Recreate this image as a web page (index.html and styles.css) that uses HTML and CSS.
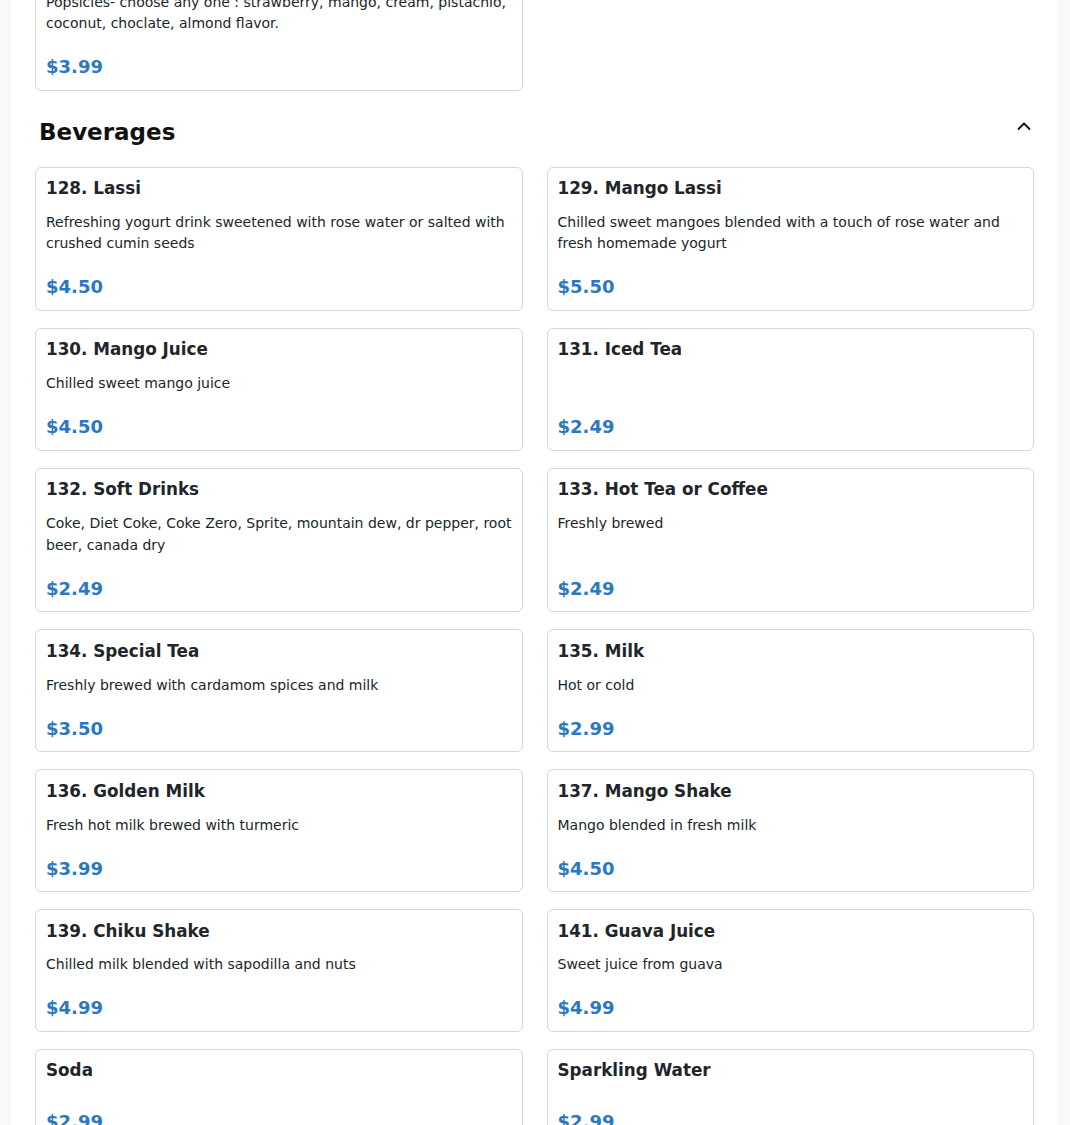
FILE: index.html
```html
<!DOCTYPE html>
<html lang="en">
<head>
<meta charset="utf-8">
<title>Menu</title>
<link rel="stylesheet" href="styles.css">
</head>
<body>
<main class="page">
  <section class="section">
    <div class="grid">
      <article class="card">
        <h3 class="card-title">127. Kulfi</h3>
        <p class="card-desc">Popsicles- choose any one : strawberry, mango, cream, pistachio, coconut, choclate, almond flavor.</p>
        <div class="card-price">$3.99</div>
      </article>
    </div>
  </section>

  <section class="section">
    <header class="section-head">
      <h2 class="section-title">Beverages</h2>
      <svg class="chevron" width="16" height="16" viewBox="0 0 16 16" aria-hidden="true"><polyline points="2.5,11 8,5.5 13.5,11" fill="none" stroke="#111" stroke-width="1.8" stroke-linecap="round" stroke-linejoin="round"/></svg>
    </header>
    <div class="grid">
      <article class="card">
        <h3 class="card-title">128. Lassi</h3>
        <p class="card-desc">Refreshing yogurt drink sweetened with rose water or salted with crushed cumin seeds</p>
        <div class="card-price">$4.50</div>
      </article>
      <article class="card">
        <h3 class="card-title">129. Mango Lassi</h3>
        <p class="card-desc">Chilled sweet mangoes blended with a touch of rose water and fresh homemade yogurt</p>
        <div class="card-price">$5.50</div>
      </article>
      <article class="card">
        <h3 class="card-title">130. Mango Juice</h3>
        <p class="card-desc">Chilled sweet mango juice</p>
        <div class="card-price">$4.50</div>
      </article>
      <article class="card">
        <h3 class="card-title">131. Iced Tea</h3>
        <div class="card-price">$2.49</div>
      </article>
      <article class="card">
        <h3 class="card-title">132. Soft Drinks</h3>
        <p class="card-desc">Coke, Diet Coke, Coke Zero, Sprite, mountain dew, dr pepper, root beer, canada dry</p>
        <div class="card-price">$2.49</div>
      </article>
      <article class="card">
        <h3 class="card-title">133. Hot Tea or Coffee</h3>
        <p class="card-desc">Freshly brewed</p>
        <div class="card-price">$2.49</div>
      </article>
      <article class="card">
        <h3 class="card-title">134. Special Tea</h3>
        <p class="card-desc">Freshly brewed with cardamom spices and milk</p>
        <div class="card-price">$3.50</div>
      </article>
      <article class="card">
        <h3 class="card-title">135. Milk</h3>
        <p class="card-desc">Hot or cold</p>
        <div class="card-price">$2.99</div>
      </article>
      <article class="card">
        <h3 class="card-title">136. Golden Milk</h3>
        <p class="card-desc">Fresh hot milk brewed with turmeric</p>
        <div class="card-price">$3.99</div>
      </article>
      <article class="card">
        <h3 class="card-title">137. Mango Shake</h3>
        <p class="card-desc">Mango blended in fresh milk</p>
        <div class="card-price">$4.50</div>
      </article>
      <article class="card">
        <h3 class="card-title">139. Chiku Shake</h3>
        <p class="card-desc">Chilled milk blended with sapodilla and nuts</p>
        <div class="card-price">$4.99</div>
      </article>
      <article class="card">
        <h3 class="card-title">141. Guava Juice</h3>
        <p class="card-desc">Sweet juice from guava</p>
        <div class="card-price">$4.99</div>
      </article>
      <article class="card">
        <h3 class="card-title">Soda</h3>
        <div class="card-price">$2.99</div>
      </article>
      <article class="card">
        <h3 class="card-title">Sparkling Water</h3>
        <div class="card-price">$2.99</div>
      </article>
    </div>
  </section>
</main>
</body>
</html>
```

FILE: styles.css
```css
* { box-sizing: border-box; }

html, body {
  margin: 0;
  padding: 0;
  background: #f8f9fa;
  font-family: "DejaVu Sans", "Liberation Sans", sans-serif;
  color: #212529;
}

.page {
  margin: -53.5px 12px 0 11px;
  background: #ffffff;
  padding: 0 24px 40px;
}

.section-head {
  display: flex;
  justify-content: space-between;
  align-items: flex-start;
  margin: 28px 0 20px;
  padding: 0 2px 0 4px;
}

.section-title {
  margin: 0;
  font-size: 23px;
  line-height: 1.2;
  font-weight: 700;
  color: #111;
}

.chevron {
  display: block;
  margin-top: -1px;
}

.grid {
  display: grid;
  grid-template-columns: 1fr 1fr;
  column-gap: 24px;
  row-gap: 17px;
}

.card {
  display: flex;
  flex-direction: column;
  border: 1px solid #d6d6d6;
  border-radius: 6px;
  padding: 10.5px 10px 9.5px;
  background: #fff;
}

.card-title {
  margin: 0 0 13.5px;
  font-size: 16.8px;
  line-height: 20.4px;
  font-weight: 700;
  color: #212529;
}

.card-desc {
  margin: 0 0 5px;
  font-size: 14px;
  line-height: 21.5px;
  color: #212529;
}

.card-price {
  margin-top: auto;
  padding-top: 14.5px;
  font-size: 18px;
  line-height: 26px;
  font-weight: 700;
  color: #2b78c2;
}
```
